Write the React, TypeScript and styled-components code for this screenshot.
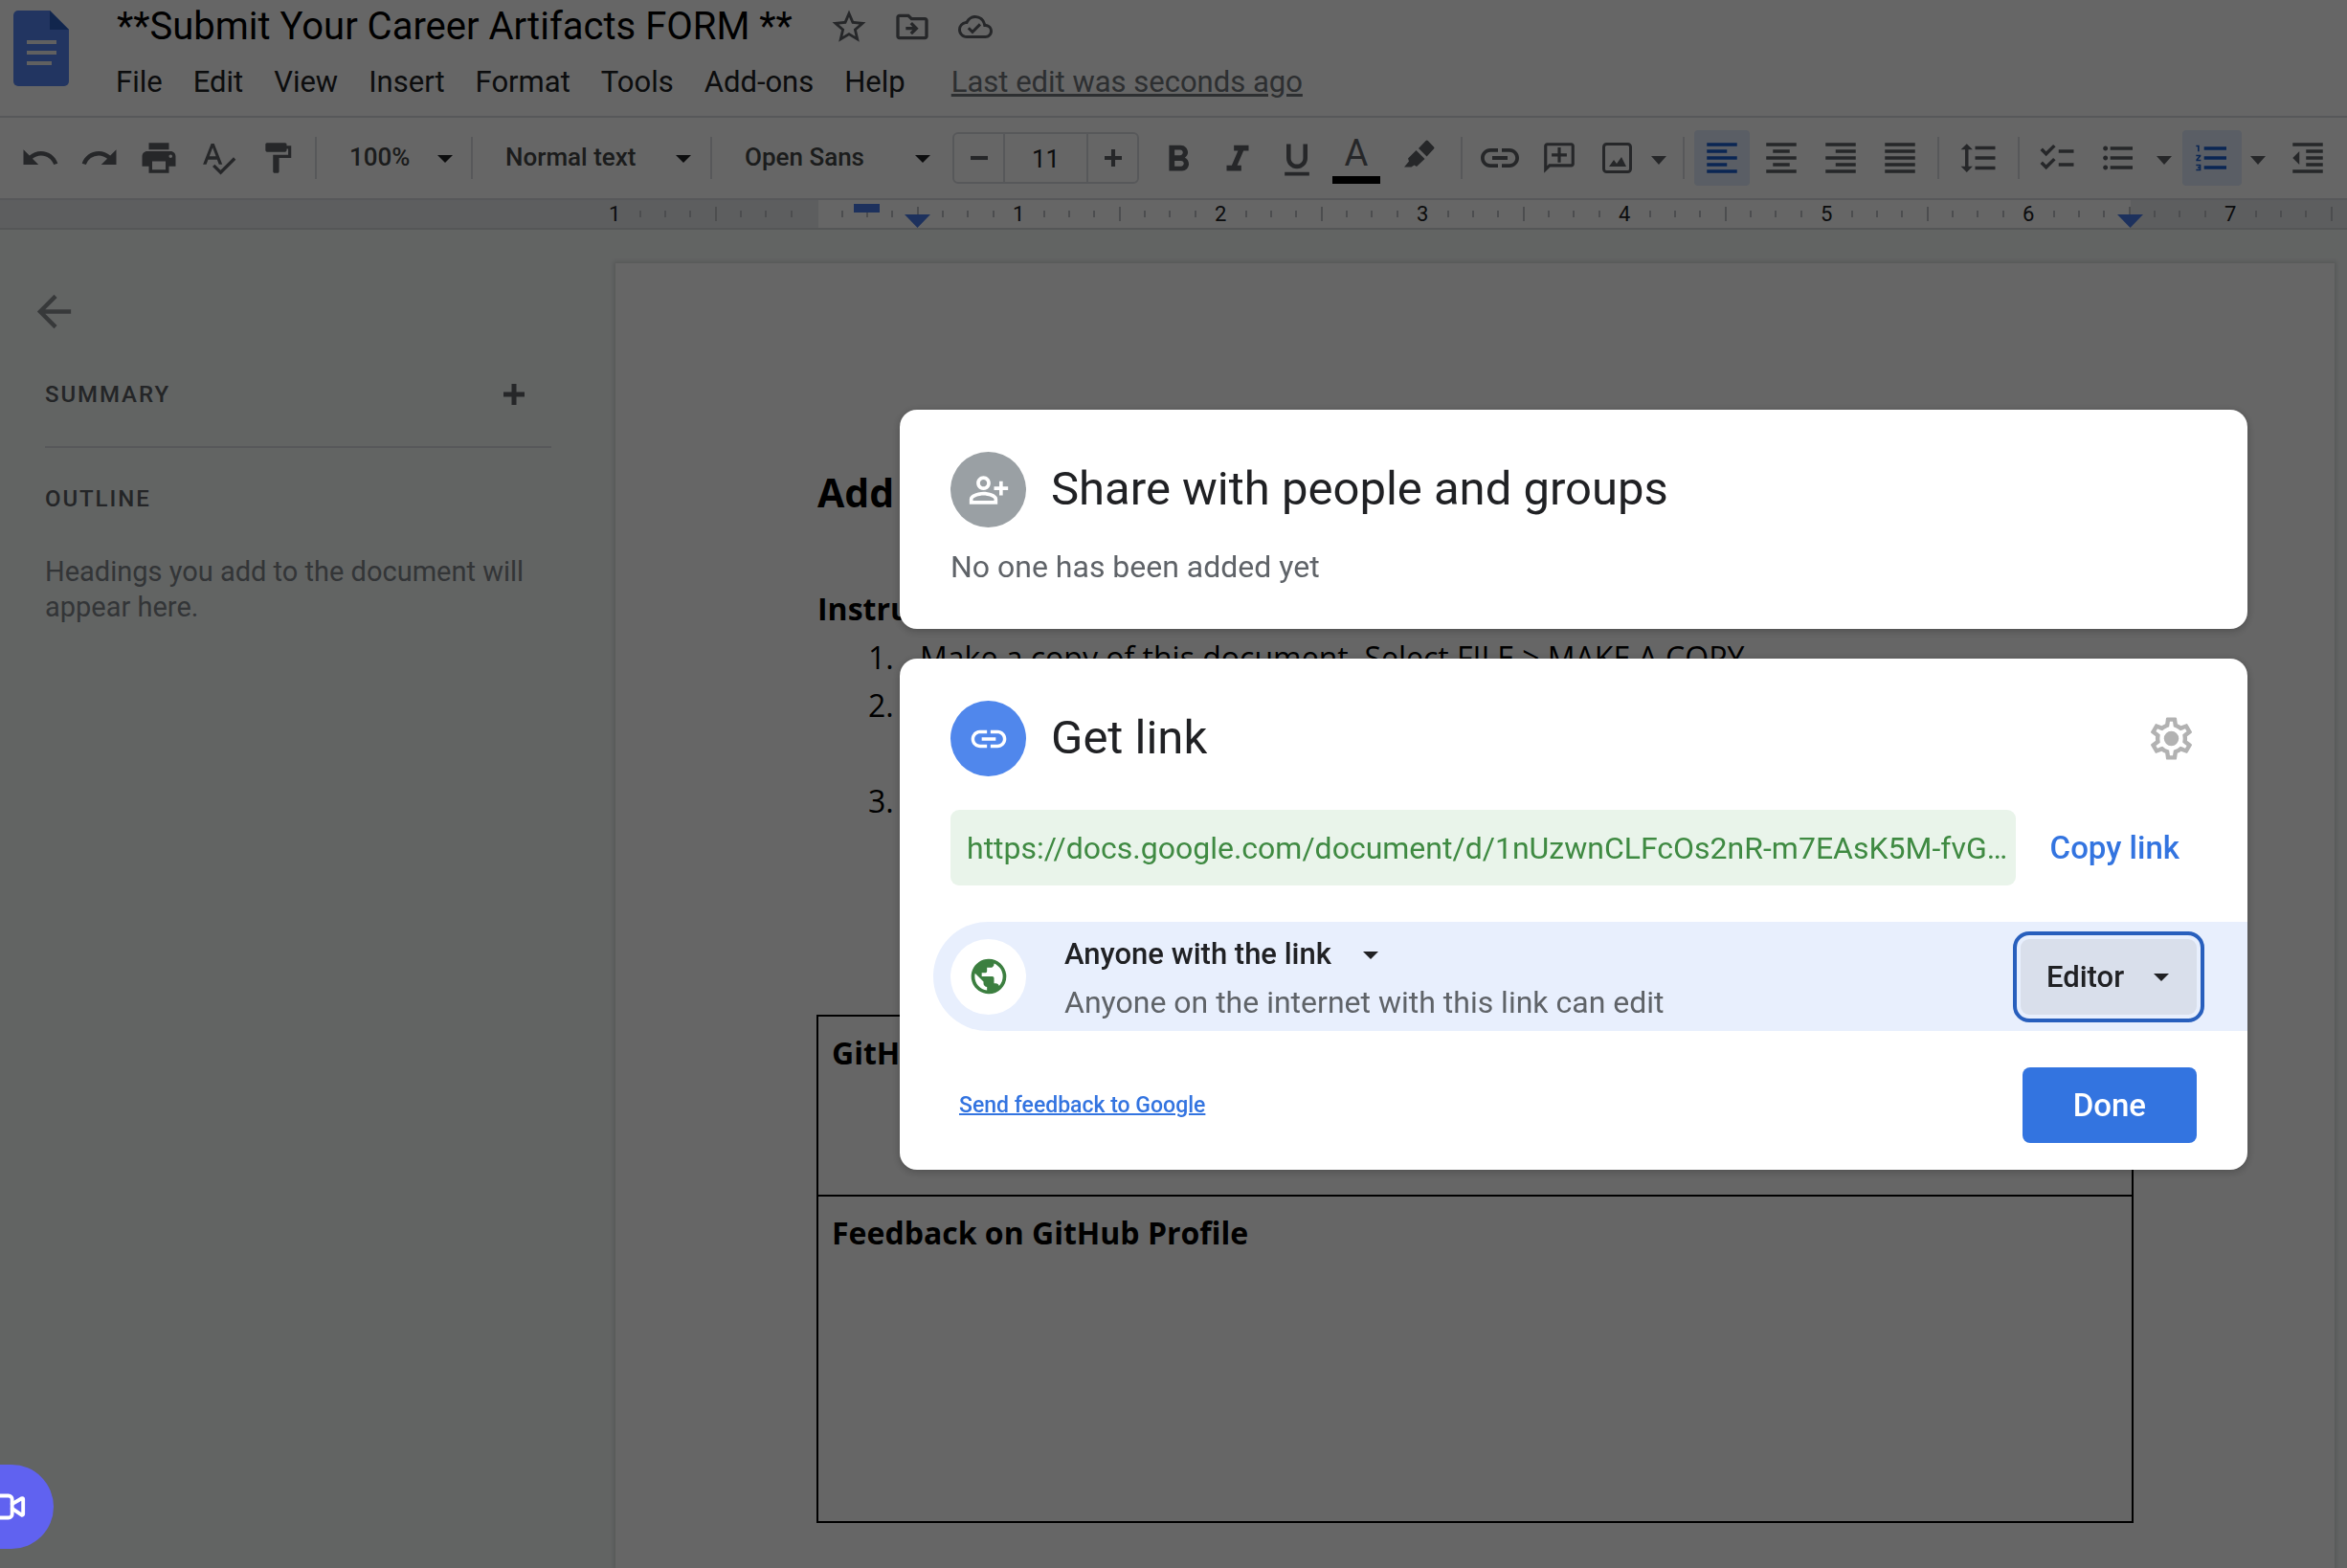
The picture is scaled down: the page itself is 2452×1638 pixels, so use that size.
import React from "react";
import styled, { createGlobalStyle, css } from "styled-components";
import {
  MdUndo,
  MdRedo,
  MdPrint,
  MdSpellcheck,
  MdFormatPaint,
  MdFormatBold,
  MdFormatItalic,
  MdFormatUnderlined,
  MdInsertLink,
  MdOutlineAddComment,
  MdFormatAlignLeft,
  MdFormatAlignCenter,
  MdFormatAlignRight,
  MdFormatAlignJustify,
  MdFormatLineSpacing,
  MdChecklist,
  MdFormatListBulleted,
  MdFormatListNumbered,
  MdFormatIndentDecrease,
  MdStarBorder,
  MdOutlineDriveFileMove,
  MdOutlineCloudDone,
  MdPublic,
  MdArrowBack,
} from "react-icons/md";
import { Video } from "lucide-react";

const color = {
  ink: "#202124",
  icon: "#5f6368",
  line: "#dadce0",
  canvas: "#f5f9f8",
  blue: "#3374e0",
};

const GlobalStyle = createGlobalStyle`
  *, *::before, *::after { box-sizing: border-box; }
  body {
    margin: 0;
    background: ${color.canvas};
    color: ${color.ink};
    font-family: Roboto, "Liberation Sans", sans-serif;
    overflow: hidden;
  }
  button, input, select { font: inherit; color: inherit; }
  svg { display: block; flex: none; }
`;

/* ---------- Shared pieces ---------- */

const PlainButton = styled.button`
  display: flex;
  align-items: center;
  justify-content: center;
  padding: 0;
  border: 0;
  background: none;
  color: ${color.icon};
`;

const SelectWrap = styled.div`
  position: relative;
  display: flex;
`;

const SelectArrow = styled.svg<{ $right: number }>`
  position: absolute;
  right: ${(p) => p.$right}px;
  top: 50%;
  margin-top: -3px;
  pointer-events: none;
`;

const Arrow = ({ right, size = 16 }: { right: number; size?: number }) => (
  <SelectArrow $right={right} width={size} height={size / 2} viewBox="0 0 16 8" fill="currentColor" aria-hidden>
    <path d="M0 0h16L8 8z" />
  </SelectArrow>
);

const Plus = ({ size }: { size: number }) => (
  <svg width={size} height={size} viewBox="0 0 22 22" stroke="currentColor" strokeWidth="5" aria-hidden>
    <path d="M11 0v22M0 11h22" />
  </svg>
);

/* ---------- Header ---------- */

const Header = styled.header`
  display: flex;
  gap: 41px;
  height: 121px;
  padding: 2px 14px 0;
  background: #fff;
`;

const Logo = styled.svg`
  margin-top: 9px;
`;

const HeaderMain = styled.div`
  display: flex;
  flex-direction: column;
`;

const TitleRow = styled.div`
  display: flex;
  align-items: center;
  height: 52px;
  padding-left: 9px;
`;

const DocTitle = styled.h1`
  margin: 0 38px 0 0;
  font-size: 40px;
  line-height: 50px;
  font-weight: 400;
  color: #000;
  white-space: nowrap;
`;

const TitleButton = styled(PlainButton)`
  width: 42px;
  height: 42px;
  margin-right: 24px;
`;

const MenuRow = styled.nav`
  display: flex;
  margin-top: 12px;
`;

const MenuItem = styled(PlainButton)`
  padding: 0 16px;
  font-size: 31px;
  line-height: 40px;
  color: ${color.ink};
  white-space: nowrap;

  &:first-child {
    padding-left: 8px;
  }
`;

const LastEdit = styled.a`
  margin-left: 32px;
  font-size: 31px;
  line-height: 40px;
  color: #70757a;
  text-decoration: underline;
  text-decoration-thickness: 3px;
  white-space: nowrap;
`;

/* ---------- Toolbar ---------- */

const Toolbar = styled.div`
  display: flex;
  align-items: center;
  height: 88px;
  padding-left: 11px;
  border-top: 2px solid ${color.line};
  border-bottom: 2px solid ${color.line};
  background: #fff;
  overflow: hidden;
`;

const ToolButton = styled(PlainButton)<{ $active?: boolean; $width?: number; $low?: boolean }>`
  flex: none;
  width: ${(p) => p.$width ?? 58}px;
  height: 58px;
  margin: 0 2px;
  border-radius: 4px;
  ${(p) => p.$low && css`padding-top: 4px;`}
  ${(p) =>
    p.$active &&
    css`
      background: #e1ebfd;
      color: #1a5fd0;
    `}
`;

const ArrowButton = styled(PlainButton)`
  flex: none;
  width: 34px;
  height: 58px;
  margin-left: -2px;
  padding-top: 4px;
`;

const Divider = styled.div`
  flex: none;
  width: 2px;
  height: 44px;
  margin: 0 8px;
  background: ${color.line};
`;

const ToolSelect = styled.select<{ $width: number }>`
  appearance: none;
  width: ${(p) => p.$width}px;
  height: 58px;
  padding: 0 32px 2px 26px;
  border: 0;
  background: none;
  color: #444746;
  font-size: 26px;
  font-weight: 500;
`;

const SizeBox = styled.div`
  display: flex;
  flex: none;
  height: 54px;
  width: 195px;
  margin: 0 10px 0 8px;
  border: 2px solid ${color.line};
  border-radius: 6px;
`;

const SizeStep = styled(PlainButton)`
  width: 51px;
`;

const SizeInput = styled.input`
  flex: 1;
  width: 0;
  min-width: 0;
  padding: 2px 0 0;
  border: solid ${color.line};
  border-width: 0 2px;
  background: none;
  text-align: center;
  font-size: 26px;
`;

const ColorLetter = styled.span`
  width: 50px;
  margin-top: 4px;
  padding-bottom: 7px;
  border-bottom: 8px solid #000;
  font-size: 38px;
  line-height: 34px;
`;

const Flipped = styled.span`
  display: flex;
  transform: scaleX(-1);
`;

const Caret = () => (
  <svg width="16" height="9" viewBox="0 0 16 8" preserveAspectRatio="none" fill="currentColor" aria-hidden>
    <path d="M0 0h16L8 8z" />
  </svg>
);

/* ---------- Ruler ---------- */

const Ruler = styled.div`
  position: relative;
  display: flex;
  height: 31px;
  padding-left: 629px;
  border-bottom: 2px solid #d5d7da;
  background: linear-gradient(to right, #e8eaed 0 855px, #fff 855px 2226px, #e8eaed 2226px);
  overflow: hidden;
`;

const Inch = styled.div`
  display: grid;
  flex: none;
  grid-template-columns: repeat(8, 1fr);
  align-items: center;
  justify-items: center;
  width: 211px;
`;

const InchNumber = styled.span`
  font-size: 22px;
  line-height: 29px;
`;

const Tick = styled.span<{ $tall?: boolean }>`
  width: 2px;
  height: ${(p) => (p.$tall ? 15 : 7)}px;
  background: #bdc1c6;
`;

const IndentMarker = styled.svg<{ $x: number }>`
  position: absolute;
  left: ${(p) => p.$x}px;
  bottom: 0;
`;

const FirstLineMarker = styled.div`
  position: absolute;
  left: 892px;
  top: 4px;
  width: 27px;
  height: 9px;
  background: #4a7be8;
`;

/* ---------- Workspace ---------- */

const Workspace = styled.main`
  display: flex;
  height: calc(100vh - 240px);
  padding: 35px 13px 0 0;
  background: ${color.canvas};
  overflow: hidden;
`;

const Sidebar = styled.aside`
  flex: 0 0 643px;
  padding: 24px 67px 0 47px;
`;

const BackButton = styled(PlainButton)`
  width: 53px;
  height: 53px;
  margin-left: -17px;
  color: #8b8f92;
`;

const SidebarRow = styled.div`
  display: flex;
  align-items: center;
  justify-content: space-between;
  height: 116px;
  padding: 5px 28px 0 0;
  border-bottom: 2px solid ${color.line};
`;

const SidebarHeading = styled.h2`
  margin: 0;
  font-size: 24px;
  line-height: 32px;
  font-weight: 500;
  letter-spacing: 0.08em;
  text-transform: uppercase;
  color: #5a5e63;
`;

const OutlineBlock = styled.section`
  padding-top: 37px;
`;

const OutlineHint = styled.p`
  margin: 42px 0 0;
  font-size: 29px;
  line-height: 37px;
  color: #80868b;
`;

const Page = styled.article`
  flex: 1;
  min-width: 0;
  padding: 211px 211px 0;
  background: #fff;
  box-shadow: 0 0 4px 2px rgba(60, 64, 67, 0.15);
  color: #000;
  font-family: "Open Sans", "Liberation Sans", sans-serif;
  font-size: 32px;
`;

const PageTitle = styled.h2`
  margin: 0;
  font-size: 41px;
  line-height: 56px;
`;

const PageSubtitle = styled.h3`
  margin: 69px 0 0;
  font-size: 32px;
  line-height: 50px;
`;

const Steps = styled.ol`
  margin: 1px 0 0;
  padding: 0;
  list-style: none;
  counter-reset: step;
`;

const Step = styled.li<{ $lines?: number }>`
  display: grid;
  grid-template-columns: 54px 1fr;
  height: ${(p) => (p.$lines ?? 1) * 50}px;
  padding-left: 53px;
  line-height: 50px;
  counter-increment: step;

  &::before {
    content: counter(step) ".";
  }
`;

const FormTable = styled.table`
  width: calc(100% + 2px);
  margin: 198px -1px 0;
  border-collapse: collapse;
`;

const FormCell = styled.td<{ $height: number }>`
  height: ${(p) => p.$height}px;
  padding: 16px 14px;
  border: 2px solid #000;
  vertical-align: top;
  font-weight: 700;
  line-height: 44px;
`;

/* ---------- Share dialog ---------- */

const Scrim = styled.div`
  position: fixed;
  inset: 0;
  display: flex;
  justify-content: flex-end;
  align-items: flex-start;
  padding: 428px 104px 0 0;
  background: rgba(0, 0, 0, 0.6);
`;

const DialogStack = styled.div`
  display: grid;
  gap: 31px;
  width: 1408px;
  max-width: 100%;
`;

const Card = styled.section<{ $bottom: number }>`
  padding: 44px 53px ${(p) => p.$bottom}px;
  border-radius: 18px;
  background: #fff;
  box-shadow: 0 2px 10px rgba(0, 0, 0, 0.25);
`;

const CardHead = styled.div`
  display: flex;
  align-items: center;
  gap: 26px;
`;

const Disc = styled.span<{ $color: string }>`
  display: flex;
  flex: none;
  align-items: center;
  justify-content: center;
  width: 79px;
  height: 79px;
  border-radius: 50%;
  background: ${(p) => p.$color};
  color: #fff;
`;

const CardTitle = styled.h2`
  flex: 1;
  margin: 0;
  padding-bottom: 2px;
  font-size: 49px;
  line-height: 60px;
  font-weight: 400;
`;

const Note = styled.p`
  margin: 23px 0 0;
  font-size: 32px;
  line-height: 36px;
  color: ${color.icon};
`;

const GearButton = styled(PlainButton)`
  width: 53px;
  height: 53px;
  color: #b2b2b2;
`;

const LinkRow = styled.div`
  display: flex;
  gap: 18px;
  margin-top: 35px;
`;

const LinkInput = styled.input`
  flex: 1;
  min-width: 0;
  height: 79px;
  padding: 0 8px 0 17px;
  border: 0;
  border-radius: 9px;
  background: #e9f4ea;
  color: #3f8a42;
  font-size: 32px;
  text-overflow: ellipsis;
`;

const CopyButton = styled(PlainButton)`
  padding: 0 18px;
  color: ${color.blue};
  font-size: 33px;
  font-weight: 500;
`;

const AccessRow = styled.div`
  display: flex;
  align-items: center;
  height: 114px;
  margin: 38px -53px 0 -18px;
  padding: 0 53px 0 18px;
  border-radius: 57px 0 0 57px;
  background: #e8effd;
`;

const AccessText = styled.div`
  flex: 1;
  display: flex;
  flex-direction: column;
  align-items: flex-start;
  padding: 4px 0 0 40px;
`;

const ScopeSelect = styled.select`
  appearance: none;
  height: 51px;
  padding: 0 49px 0 0;
  border: 0;
  background: none;
  font-size: 31px;
  font-weight: 500;
`;

const AccessHint = styled.span`
  font-size: 32px;
  line-height: 51px;
  color: ${color.icon};
`;

const RoleSelect = styled.select`
  appearance: none;
  width: 184px;
  height: 79px;
  padding: 0 40px 0 27px;
  border: 0;
  border-radius: 9px;
  outline: 4px solid #285fbd;
  outline-offset: 4px;
  background: #d9dfeb;
  font-size: 31px;
  font-weight: 500;
`;

const CardFoot = styled.div`
  display: flex;
  align-items: center;
  justify-content: space-between;
  margin-top: 38px;
  padding-left: 9px;
`;

const FeedbackLink = styled.a`
  color: ${color.blue};
  font-size: 23px;
  font-weight: 500;
  text-decoration: underline;
  text-decoration-thickness: 2px;
`;

const DoneButton = styled(PlainButton)`
  height: 79px;
  padding: 0 53px;
  border-radius: 8px;
  background: ${color.blue};
  color: #fff;
  font-size: 33px;
  font-weight: 500;
`;

const RecordButton = styled(PlainButton)`
  position: fixed;
  left: -46px;
  bottom: 20px;
  width: 102px;
  height: 88px;
  border-radius: 44px;
  background: #6062f0;
  color: #fff;
`;

const inches = ["1", "", "1", "2", "3", "4", "5", "6", "7"];

export default function App() {
  return (
    <>
      <GlobalStyle />
      <Header>
        <Logo width="58" height="79" viewBox="0 0 58 79" aria-hidden>
          <path d="M5 0h33l20 20v54a5 5 0 0 1-5 5H5a5 5 0 0 1-5-5V5a5 5 0 0 1 5-5z" fill="#5686f2" />
          <path d="M38 0l20 20H38z" fill="#2b5fc0" />
          <path d="M14 31h31v4H14zM14 42h31v4H14zM14 53h26v4H14z" fill="#f1f1f1" />
        </Logo>
        <HeaderMain>
          <TitleRow>
            <DocTitle>**Submit Your Career Artifacts FORM **</DocTitle>
            <TitleButton aria-label="Star"><MdStarBorder size={42} /></TitleButton>
            <TitleButton aria-label="Move"><MdOutlineDriveFileMove size={40} /></TitleButton>
            <TitleButton aria-label="Document status"><MdOutlineCloudDone size={36} /></TitleButton>
          </TitleRow>
          <MenuRow>
            {["File", "Edit", "View", "Insert", "Format", "Tools", "Add-ons", "Help"].map((m) => (
              <MenuItem key={m}>{m}</MenuItem>
            ))}
            <LastEdit href="#history">Last edit was seconds ago</LastEdit>
          </MenuRow>
        </HeaderMain>
      </Header>

      <Toolbar role="toolbar">
        <ToolButton aria-label="Undo"><MdUndo size={42} /></ToolButton>
        <ToolButton aria-label="Redo"><MdRedo size={42} /></ToolButton>
        <ToolButton aria-label="Print"><MdPrint size={42} /></ToolButton>
        <ToolButton aria-label="Spell check"><MdSpellcheck size={40} /></ToolButton>
        <ToolButton aria-label="Paint format"><MdFormatPaint size={38} /></ToolButton>
        <Divider />
        <SelectWrap>
          <ToolSelect $width={145} aria-label="Zoom"><option>100%</option></ToolSelect>
          <Arrow right={11} />
        </SelectWrap>
        <Divider />
        <SelectWrap>
          <ToolSelect $width={232} aria-label="Styles"><option>Normal text</option></ToolSelect>
          <Arrow right={12} />
        </SelectWrap>
        <Divider />
        <SelectWrap>
          <ToolSelect $width={235} aria-label="Font"><option>Open Sans</option></ToolSelect>
          <Arrow right={15} />
        </SelectWrap>
        <SizeBox>
          <SizeStep aria-label="Decrease font size">
            <svg width="18" height="18" viewBox="0 0 22 22" stroke="currentColor" strokeWidth="5" aria-hidden>
              <path d="M0 11h22" />
            </svg>
          </SizeStep>
          <SizeInput aria-label="Font size" defaultValue="11" />
          <SizeStep aria-label="Increase font size"><Plus size={18} /></SizeStep>
        </SizeBox>
        <ToolButton $low aria-label="Bold"><MdFormatBold size={46} /></ToolButton>
        <ToolButton $low aria-label="Italic"><MdFormatItalic size={46} /></ToolButton>
        <ToolButton $low aria-label="Underline"><MdFormatUnderlined size={44} /></ToolButton>
        <ToolButton aria-label="Text color"><ColorLetter>A</ColorLetter></ToolButton>
        <ToolButton $width={66} aria-label="Highlight color">
          <svg width="32" height="38" viewBox="0 0 32 38" fill="currentColor" aria-hidden>
            <path d="M15 9l7.600-8a1.500 1.500 0 0 1 2.200 0l6.200 6.600a1.500 1.500 0 0 1 0 2L23.600 17.500z" />
            <path d="M12.500 11l9 9-8.500 8-2.500-1.500-3 2H0l5-6-1-3z" />
          </svg>
        </ToolButton>
        <Divider />
        <ToolButton aria-label="Insert link"><MdInsertLink size={48} /></ToolButton>
        <ToolButton aria-label="Add comment"><Flipped><MdOutlineAddComment size={38} /></Flipped></ToolButton>
        <ToolButton $width={54} aria-label="Insert image">
          <svg width="31" height="32" viewBox="0 0 31 32" fill="none" aria-hidden>
            <rect x="1.500" y="1.500" width="28" height="29" rx="3" stroke="currentColor" strokeWidth="3" />
            <path d="M7 25l5-7 3 4 5-7 5 10z" fill="currentColor" />
          </svg>
        </ToolButton>
        <ArrowButton aria-label="Image options"><Caret /></ArrowButton>
        <Divider />
        <ToolButton $active aria-label="Left align"><MdFormatAlignLeft size={42} /></ToolButton>
        <ToolButton aria-label="Center align"><MdFormatAlignCenter size={42} /></ToolButton>
        <ToolButton aria-label="Right align"><MdFormatAlignRight size={42} /></ToolButton>
        <ToolButton aria-label="Justify"><MdFormatAlignJustify size={42} /></ToolButton>
        <Divider />
        <ToolButton $width={62} aria-label="Line spacing"><MdFormatLineSpacing size={42} /></ToolButton>
        <Divider />
        <ToolButton aria-label="Checklist"><MdChecklist size={42} /></ToolButton>
        <ToolButton $width={62} aria-label="Bulleted list"><MdFormatListBulleted size={40} /></ToolButton>
        <ArrowButton aria-label="Bulleted list options"><Caret /></ArrowButton>
        <ToolButton $active $width={62} aria-label="Numbered list"><MdFormatListNumbered size={40} /></ToolButton>
        <ArrowButton aria-label="Numbered list options"><Caret /></ArrowButton>
        <ToolButton $width={66} aria-label="Decrease indent"><MdFormatIndentDecrease size={42} /></ToolButton>
      </Toolbar>

      <Ruler aria-hidden>
        {inches.map((n, i) => (
          <Inch key={i}>
            <InchNumber>{n}</InchNumber>
            <Tick />
            <Tick />
            <Tick />
            <Tick $tall />
            {i < inches.length - 1 && (
              <>
                <Tick />
                <Tick />
                <Tick />
              </>
            )}
          </Inch>
        ))}
        <FirstLineMarker />
        <IndentMarker $x={945} width="27" height="14" viewBox="0 0 27 14">
          <path d="M0 0h27L13.500 14z" fill="#4a7be8" />
        </IndentMarker>
        <IndentMarker $x={2212} width="27" height="14" viewBox="0 0 27 14">
          <path d="M0 0h27L13.500 14z" fill="#4a7be8" />
        </IndentMarker>
      </Ruler>

      <Workspace>
        <Sidebar>
          <BackButton aria-label="Close outline"><MdArrowBack size={53} /></BackButton>
          <SidebarRow>
            <SidebarHeading>Summary</SidebarHeading>
            <PlainButton aria-label="Add summary"><Plus size={22} /></PlainButton>
          </SidebarRow>
          <OutlineBlock>
            <SidebarHeading>Outline</SidebarHeading>
            <OutlineHint>Headings you add to the document will appear here.</OutlineHint>
          </OutlineBlock>
        </Sidebar>
        <Page>
          <PageTitle>Add</PageTitle>
          <PageSubtitle>Instructions</PageSubtitle>
          <Steps>
            <Step>Make a copy of this document. Select FILE &gt; MAKE A COPY</Step>
            <Step $lines={2} />
            <Step />
          </Steps>
          <FormTable>
            <tbody>
              <tr><FormCell $height={188}>GitHub</FormCell></tr>
              <tr><FormCell $height={341}>Feedback on GitHub Profile</FormCell></tr>
            </tbody>
          </FormTable>
        </Page>
      </Workspace>

      <Scrim>
        <DialogStack role="dialog" aria-label="Share">
          <Card $bottom={47}>
            <CardHead>
              <Disc $color="#9aa0a4">
                <svg width="44" height="44" viewBox="0 0 24 24" fill="currentColor" aria-hidden>
                  <path d="M9 12c2.210 0 4-1.790 4-4s-1.790-4-4-4-4 1.790-4 4 1.790 4 4 4zm0-6c1.100 0 2 .900 2 2s-.900 2-2 2-2-.900-2-2 .900-2 2-2zM9 13c-2.670 0-8 1.340-8 4v3h16v-3c0-2.660-5.330-4-8-4zm6 5H3v-.990C3.200 16.290 6.300 15 9 15s5.800 1.290 6 2v1zM20 10V7h-2v3h-3v2h3v3h2v-3h3v-2z" />
                </svg>
              </Disc>
              <CardTitle>Share with people and groups</CardTitle>
            </CardHead>
            <Note>No one has been added yet</Note>
          </Card>

          <Card $bottom={28}>
            <CardHead>
              <Disc $color="#5087ec"><MdInsertLink size={44} /></Disc>
              <CardTitle>Get link</CardTitle>
              <GearButton aria-label="Settings">
                <svg width="53" height="53" viewBox="0 0 24 24" aria-hidden>
                  <path
                    d="M19.430 12.980c.040-.320.070-.640.070-.980s-.030-.660-.070-.980l2.110-1.650c.190-.150.240-.420.120-.640l-2-3.460c-.090-.160-.260-.250-.440-.250-.060 0-.120.010-.170.030l-2.490 1c-.520-.400-1.080-.730-1.690-.980l-.380-2.650C14.460 2.180 14.250 2 14 2h-4c-.250 0-.460.180-.490.420l-.380 2.650c-.610.250-1.170.590-1.690.980l-2.490-1c-.060-.020-.120-.030-.180-.030-.170 0-.340.090-.430.250l-2 3.460c-.130.220-.070.490.120.640l2.110 1.650c-.040.320-.070.650-.070.980s.030.660.070.980l-2.110 1.650c-.190.150-.240.420-.120.640l2 3.460c.090.160.260.250.440.250.060 0 .120-.010.170-.030l2.490-1c.520.400 1.080.730 1.690.980l.380 2.650c.030.240.240.420.490.420h4c.250 0 .460-.180.490-.420l.380-2.650c.610-.250 1.170-.590 1.690-.980l2.490 1c.060.020.120.030.180.030.170 0 .340-.090.430-.250l2-3.460c.120-.220.070-.490-.120-.640l-2.110-1.650zm-1.980-1.710c.040.310.050.520.050.730s-.020.430-.050.730l-.140 1.130.890.700 1.080.840-.700 1.210-1.270-.510-1.040-.420-.900.680c-.430.320-.840.560-1.250.730l-1.060.430-.160 1.130-.200 1.350h-1.400l-.190-1.350-.160-1.130-1.060-.430c-.430-.180-.830-.410-1.230-.710l-.910-.700-1.060.430-1.270.510-.700-1.210 1.080-.840.890-.700-.140-1.130c-.030-.310-.050-.540-.050-.740s.020-.430.050-.730l.140-1.130-.890-.700-1.080-.840.700-1.210 1.270.510 1.040.420.900-.680c.430-.320.840-.560 1.250-.730l1.060-.430.160-1.130.200-1.350h1.390l.190 1.350.160 1.130 1.060.430c.430.180.830.410 1.230.710l.910.700 1.060-.430 1.270-.510.700 1.210-1.070.850-.890.700.140 1.130z"
                    fill="currentColor"
                  />
                  <circle cx="12" cy="12" r="3.500" fill="currentColor" />
                </svg>
              </GearButton>
            </CardHead>
            <LinkRow>
              <LinkInput
                readOnly
                aria-label="Link"
                value="https://docs.google.com/document/d/1nUzwnCLFcOs2nR-m7EAsK5M-fvG…"
              />
              <CopyButton>Copy link</CopyButton>
            </LinkRow>
            <AccessRow>
              <Disc $color="#fff"><MdPublic size={44} color="#3c7f40" /></Disc>
              <AccessText>
                <SelectWrap>
                  <ScopeSelect aria-label="General access"><option>Anyone with the link</option></ScopeSelect>
                  <Arrow right={0} />
                </SelectWrap>
                <AccessHint>Anyone on the internet with this link can edit</AccessHint>
              </AccessText>
              <SelectWrap>
                <RoleSelect aria-label="Role"><option>Editor</option></RoleSelect>
                <Arrow right={29} />
              </SelectWrap>
            </AccessRow>
            <CardFoot>
              <FeedbackLink href="#feedback">Send feedback to Google</FeedbackLink>
              <DoneButton>Done</DoneButton>
            </CardFoot>
          </Card>
        </DialogStack>
      </Scrim>

      <RecordButton aria-label="Record video"><Video size={46} /></RecordButton>
    </>
  );
}
